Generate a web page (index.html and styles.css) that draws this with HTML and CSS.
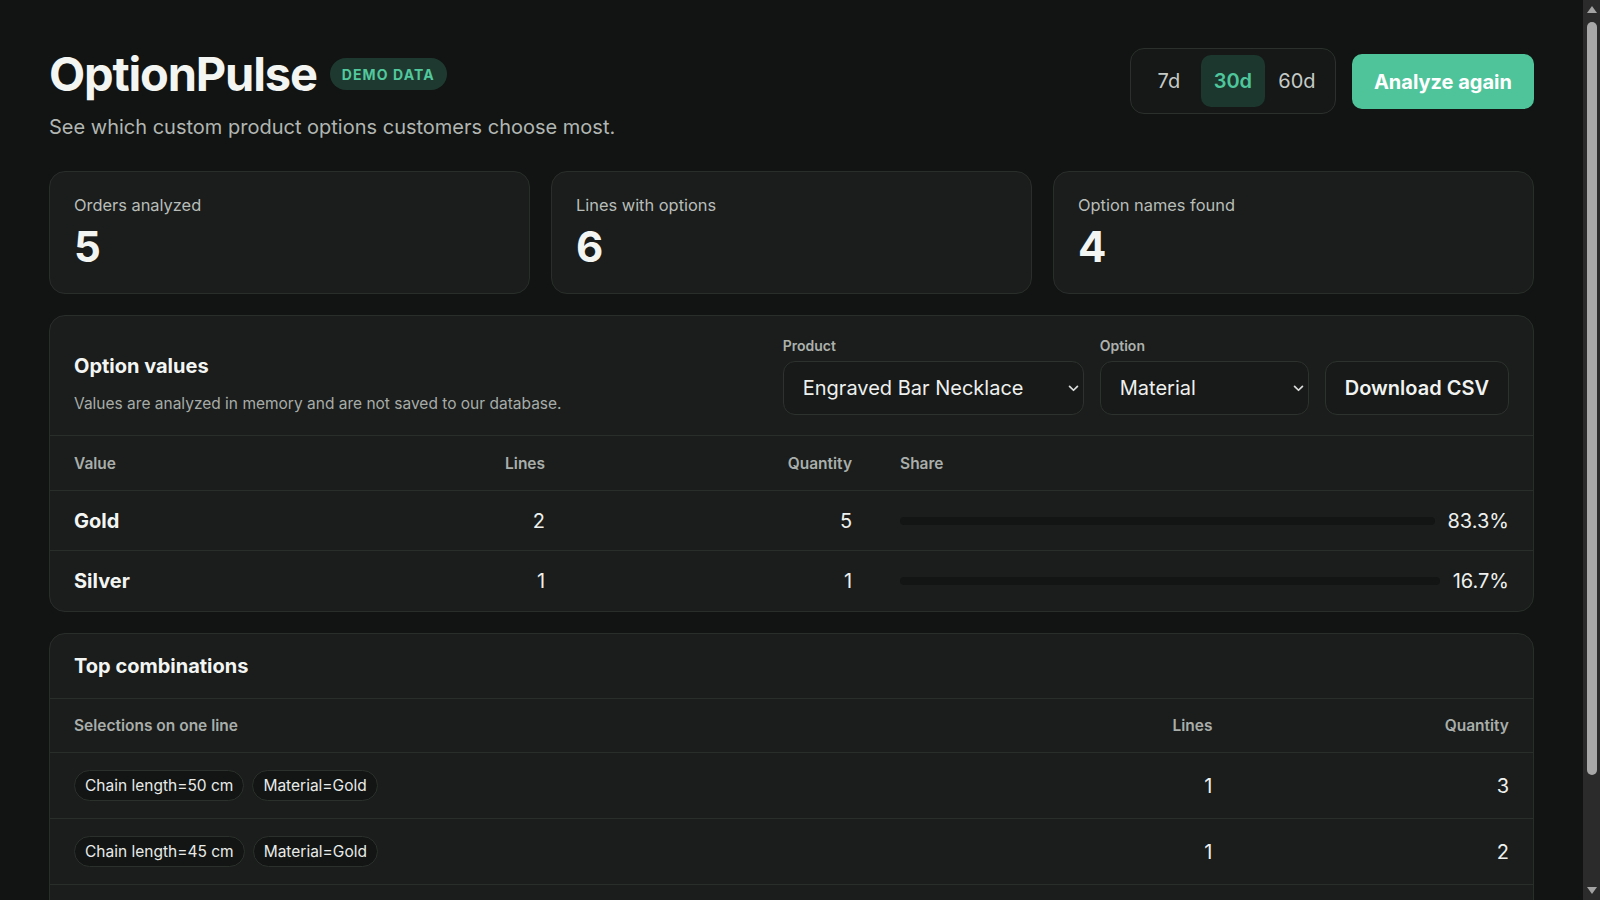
FILE: index.html
```html
<!DOCTYPE html>
<html lang="en">
<head>
<meta charset="utf-8">
<title>OptionPulse</title>
<link rel="stylesheet" href="styles.css">
</head>
<body>
<main class="page">
  <header class="top">
    <div class="brand">
      <div class="brand-row">
        <h1 class="title">OptionPulse</h1>
        <span class="badge">DEMO DATA</span>
      </div>
      <p class="subtitle">See which custom product options customers choose most.</p>
    </div>
    <div class="actions">
      <div class="segmented">
        <button class="seg">7d</button>
        <button class="seg seg-active">30d</button>
        <button class="seg">60d</button>
      </div>
      <button class="primary">Analyze again</button>
    </div>
  </header>

  <section class="stats">
    <div class="card stat">
      <div class="stat-label">Orders analyzed</div>
      <div class="stat-value">5</div>
    </div>
    <div class="card stat">
      <div class="stat-label">Lines with options</div>
      <div class="stat-value">6</div>
    </div>
    <div class="card stat">
      <div class="stat-label">Option names found</div>
      <div class="stat-value">4</div>
    </div>
  </section>

  <section class="card panel">
    <div class="panel-head panel-head-tall">
      <div class="panel-intro">
        <h2 class="panel-title">Option values</h2>
        <p class="panel-desc">Values are analyzed in memory and are not saved to our database.</p>
      </div>
      <div class="controls">
        <label class="field">
          <span class="field-label">Product</span>
          <span class="select-wrap select-product">
            <select class="select">
              <option>Engraved Bar Necklace</option>
            </select>
            <svg class="chev" viewBox="0 0 12 8" width="11" height="7"><path d="M1.5 1.5 6 6l4.5-4.5" fill="none" stroke="currentColor" stroke-width="2" stroke-linecap="round" stroke-linejoin="round"/></svg>
          </span>
        </label>
        <label class="field">
          <span class="field-label">Option</span>
          <span class="select-wrap select-option">
            <select class="select">
              <option>Material</option>
            </select>
            <svg class="chev" viewBox="0 0 12 8" width="11" height="7"><path d="M1.5 1.5 6 6l4.5-4.5" fill="none" stroke="currentColor" stroke-width="2" stroke-linecap="round" stroke-linejoin="round"/></svg>
          </span>
        </label>
        <button class="secondary">Download CSV</button>
      </div>
    </div>

    <div class="grid values-grid grid-head">
      <div class="cell">Value</div>
      <div class="cell num">Lines</div>
      <div class="cell num">Quantity</div>
      <div class="cell">Share</div>
    </div>
    <div class="grid values-grid grid-row">
      <div class="cell name">Gold</div>
      <div class="cell num">2</div>
      <div class="cell num">5</div>
      <div class="cell share"><span class="bar"></span><span class="pct">83.3%</span></div>
    </div>
    <div class="grid values-grid grid-row">
      <div class="cell name">Silver</div>
      <div class="cell num">1</div>
      <div class="cell num">1</div>
      <div class="cell share"><span class="bar"></span><span class="pct">16.7%</span></div>
    </div>
  </section>

  <section class="card panel">
    <div class="panel-head">
      <h2 class="panel-title">Top combinations</h2>
    </div>
    <div class="grid combos-grid grid-head">
      <div class="cell">Selections on one line</div>
      <div class="cell num">Lines</div>
      <div class="cell num">Quantity</div>
    </div>
    <div class="grid combos-grid combo-row">
      <div class="cell chips"><span class="chip">Chain length=50 cm</span><span class="chip">Material=Gold</span></div>
      <div class="cell num">1</div>
      <div class="cell num">3</div>
    </div>
    <div class="grid combos-grid combo-row">
      <div class="cell chips"><span class="chip">Chain length=45 cm</span><span class="chip">Material=Gold</span></div>
      <div class="cell num">1</div>
      <div class="cell num">2</div>
    </div>
    <div class="grid combos-grid combo-row">
      <div class="cell chips"><span class="chip">Chain length=45 cm</span><span class="chip">Material=Silver</span></div>
      <div class="cell num">1</div>
      <div class="cell num">1</div>
    </div>
  </section>
</main>
<div class="scrollbar" aria-hidden="true">
  <span class="sb-arrow sb-up"></span>
  <span class="sb-thumb"></span>
  <span class="sb-space"></span>
  <span class="sb-arrow sb-down"></span>
</div>
</body>
</html>
```

FILE: styles.css
```css
:root {
  color-scheme: dark;
}

* {
  box-sizing: border-box;
}

body {
  margin: 0;
  background: #111412;
  color: #f1f3f1;
  font-family: Inter, "Noto Sans", "Liberation Sans", sans-serif;
}

.page {
  padding: 49px 66px 48px 49px;
}

/* Header */
.top {
  display: flex;
  justify-content: space-between;
  align-items: flex-start;
}

.brand-row {
  display: flex;
  align-items: center;
  gap: 13px;
  height: 52px;
  margin-top: -1px;
}

.title {
  margin: 0;
  font-size: 47px;
  line-height: 52px;
  font-weight: 700;
  letter-spacing: -0.025em;
  color: #f3f5f3;
}

.badge {
  display: inline-flex;
  align-items: center;
  height: 32px;
  padding: 0 12px;
  border-radius: 999px;
  background: #1e3a30;
  color: #52c89d;
  font-size: 14px;
  font-weight: 700;
  letter-spacing: 0.08em;
}

.subtitle {
  margin: 13px 0 0;
  font-size: 20px;
  line-height: 28px;
  color: #b2b6b3;
}

.actions {
  display: flex;
  align-items: center;
  gap: 16px;
  margin-top: -1px;
}

.segmented {
  display: flex;
  padding: 6px;
  border: 1px solid #2c302d;
  border-radius: 14px;
  background: #151816;
}

.seg {
  width: 64px;
  height: 52px;
  border: 0;
  border-radius: 10px;
  background: transparent;
  color: #c6cac7;
  font: inherit;
  font-size: 20px;
}

.seg-active {
  background: #1c382e;
  color: #4fc79c;
  font-weight: 600;
}

.primary {
  height: 55px;
  padding: 0 22px;
  border: 0;
  border-radius: 10px;
  background: #4fc49b;
  color: #ffffff;
  font: inherit;
  font-size: 20px;
  font-weight: 700;
  margin-top: 1px;
}

/* Cards */
.card {
  background: #1a1d1b;
  border: 1px solid #2a2e2b;
  border-radius: 16px;
}

.stats {
  display: grid;
  grid-template-columns: repeat(3, 1fr);
  gap: 21px;
  margin-top: 30px;
}

.stat {
  padding: 21px 24px 21px;
}

.stat-label {
  font-size: 16.4px;
  line-height: 24px;
  color: #b9bdba;
}

.stat-value {
  margin-top: 5px;
  font-size: 42px;
  line-height: 50px;
  font-weight: 700;
  color: #f3f5f3;
}

.panel {
  margin-top: 21px;
  overflow: hidden;
}

.panel-head {
  display: flex;
  justify-content: space-between;
  align-items: flex-end;
  padding: 18px 24px;
  border-bottom: 1px solid #2a2e2b;
}

.panel-head-tall {
  padding: 20px 24px;
}

.panel-title {
  margin: 0;
  font-size: 20px;
  line-height: 28px;
  font-weight: 700;
  color: #f3f5f3;
}

.panel-desc {
  margin: 13px 0 0;
  font-size: 15.5px;
  line-height: 22px;
  color: #a7aca9;
}

.controls {
  display: flex;
  align-items: flex-end;
  gap: 16px;
}

.field {
  display: flex;
  flex-direction: column;
  gap: 5px;
}

.field-label {
  font-size: 14px;
  line-height: 20px;
  font-weight: 600;
  color: #adb1ae;
}

.select-wrap {
  position: relative;
  display: block;
}

.select-product {
  width: 301px;
}

.select-option {
  width: 209px;
}

.select {
  appearance: none;
  -webkit-appearance: none;
  width: 100%;
  height: 54px;
  padding: 0 32px 0 19px;
  border: 1px solid #2e322f;
  border-radius: 12px;
  background: #171a18;
  color: #eef0ee;
  font: inherit;
  font-size: 20px;
}

.chev {
  position: absolute;
  right: 5px;
  top: 24px;
  color: #d9dcda;
  pointer-events: none;
}

.secondary {
  height: 54px;
  padding: 0 19px;
  border: 1px solid #2e322f;
  border-radius: 12px;
  background: #171a18;
  color: #f1f3f1;
  font: inherit;
  font-size: 20px;
  font-weight: 600;
}

/* Tables */
.grid {
  display: grid;
  align-items: center;
  border-bottom: 1px solid #2a2e2b;
}

.grid:last-child {
  border-bottom: 0;
}

.values-grid {
  grid-template-columns: 25% 10% 307px 1fr;
}

.combos-grid {
  grid-template-columns: 70% 10% 20%;
}

.cell {
  padding: 0 24px;
}

.num {
  text-align: right;
}

.grid-head {
  height: 55px;
  font-size: 15.5px;
  font-weight: 600;
  color: #a9aeab;
}

.combos-grid.grid-head {
  height: 54px;
}

.grid-row {
  height: 60px;
  font-size: 20px;
  color: #eef0ee;
}

.name {
  font-weight: 700;
  color: #f3f5f3;
}

.share {
  display: flex;
  align-items: center;
  gap: 13px;
}

.bar {
  flex: 1;
  height: 8px;
  border-radius: 4px;
  background: #121513;
}

.pct {
  font-size: 20px;
}

.combo-row {
  height: 66px;
  font-size: 20px;
  color: #eef0ee;
}

.chips {
  display: flex;
  gap: 8px;
}

.chip {
  display: inline-flex;
  align-items: center;
  height: 31px;
  padding: 0 10px;
  border: 1px solid #2c302d;
  border-radius: 999px;
  background: #121513;
  color: #e8ebe9;
  font-size: 15.5px;
}

/* Window scrollbar (drawn over the page edge) */
.scrollbar {
  position: fixed;
  top: 0;
  right: 0;
  bottom: 0;
  width: 17px;
  display: flex;
  flex-direction: column;
  align-items: center;
  background: #2b2b2c;
}

.sb-arrow {
  width: 0;
  height: 0;
  border-left: 5px solid transparent;
  border-right: 5px solid transparent;
}

.sb-up {
  margin-top: 6px;
  border-bottom: 7px solid #a3a3a3;
}

.sb-down {
  margin-bottom: 6px;
  border-top: 7px solid #a3a3a3;
}

.sb-thumb {
  width: 10px;
  height: 753px;
  margin-top: 9px;
  border-radius: 5px;
  background: #a8a8a8;
}

.sb-space {
  flex: 1;
}
```
